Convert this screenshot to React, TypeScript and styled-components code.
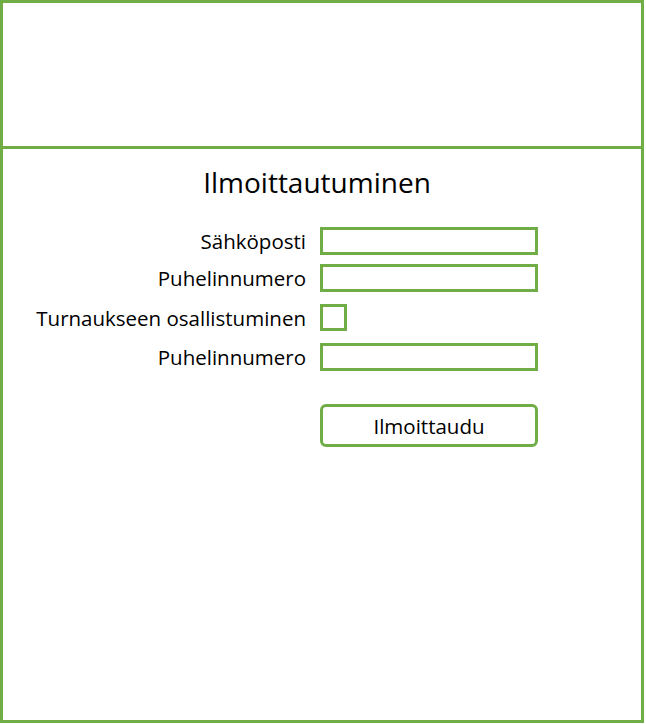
import React from 'react'
import styled, { createGlobalStyle } from 'styled-components'

const green = '#70AD47'

const GlobalStyle = createGlobalStyle`
  body {
    margin: 0;
    background: #ffffff;
    font-family: 'Open Sans', 'Noto Sans', sans-serif;
    color: #000000;
  }
`

type Field = {
  label: string
  kind: 'text' | 'check'
}

const fields: Field[] = [
  { label: 'Sähköposti', kind: 'text' },
  { label: 'Puhelinnumero', kind: 'text' },
  { label: 'Turnaukseen osallistuminen', kind: 'check' },
  { label: 'Puhelinnumero', kind: 'text' },
]

const rowGaps = [0, 9, 12, 12]

export default function App() {
  return (
    <>
      <GlobalStyle />
      <Frame>
        <Header />
        <Main>
          <Title>Ilmoittautuminen</Title>
          <Form onSubmit={e => e.preventDefault()}>
            {fields.map((f, i) => (
              <Row key={i} $gap={rowGaps[i]}>
                <Label>{f.label}</Label>
                {f.kind === 'text' ? <TextBox type="text" /> : <CheckBox type="checkbox" />}
              </Row>
            ))}
            <Row $gap={33}>
              <span />
              <Button type="submit">Ilmoittaudu</Button>
            </Row>
          </Form>
        </Main>
      </Frame>
    </>
  )
}

const Frame = styled.div`
  width: 644px;
  height: 723px;
  box-sizing: border-box;
  border: 3px solid ${green};
  display: flex;
  flex-direction: column;
`

const Header = styled.header`
  height: 143px;
  flex-shrink: 0;
  border-bottom: 3px solid ${green};
`

const Main = styled.main`
  flex: 1;
  display: flex;
  flex-direction: column;
`

const Title = styled.h1`
  margin: 15px 0 0;
  font-size: 28px;
  line-height: 36px;
  font-weight: 400;
  text-align: center;
  padding-right: 10px;
`

const Form = styled.form`
  margin-top: 27px;
  display: flex;
  flex-direction: column;
`

const Row = styled.div<{ $gap: number }>`
  display: grid;
  grid-template-columns: 303px 218px;
  column-gap: 14px;
  align-items: center;
  margin-top: ${p => p.$gap}px;
`

const Label = styled.label`
  text-align: right;
  font-size: 20.5px;
  line-height: 26px;
  white-space: nowrap;
`

const TextBox = styled.input`
  appearance: none;
  box-sizing: border-box;
  width: 218px;
  height: 28px;
  margin: 0;
  border: 3px solid ${green};
  border-radius: 0;
  background: #ffffff;
  outline: none;
`

const CheckBox = styled.input`
  appearance: none;
  box-sizing: border-box;
  width: 27px;
  height: 27px;
  margin: 0;
  border: 3px solid ${green};
  border-radius: 0;
  background: #ffffff;
`

const Button = styled.button`
  box-sizing: border-box;
  width: 218px;
  height: 43px;
  border: 3px solid ${green};
  border-radius: 6px;
  background: #ffffff;
  font-family: inherit;
  font-size: 20.5px;
  color: #000000;
  cursor: pointer;
`
